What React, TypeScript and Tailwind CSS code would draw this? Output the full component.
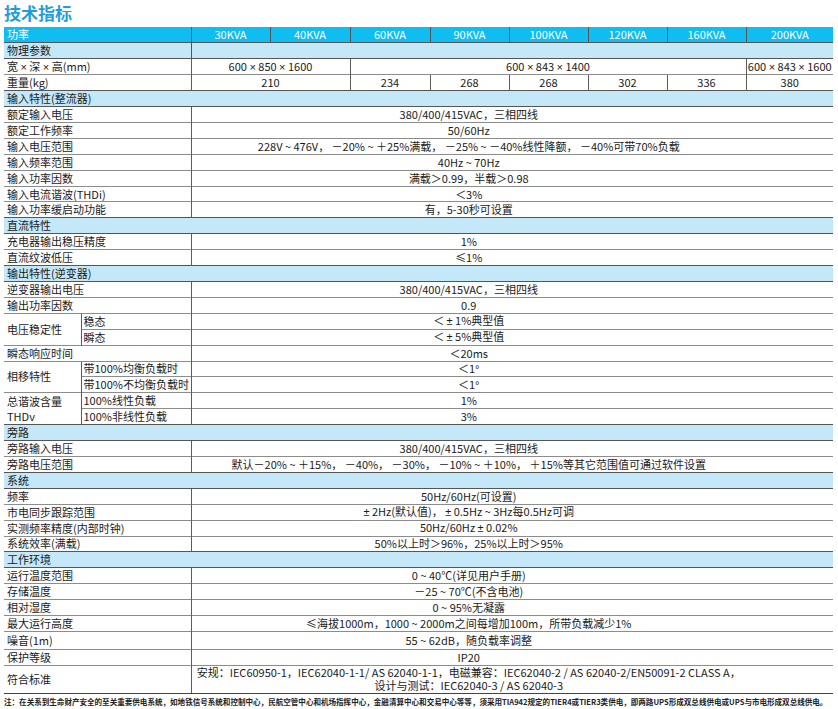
import React from "react"

const LINE = "border-t border-[#8c8c8c]"
const DARK = "border-[#555]"

// narrow symbols: the CJK font draws × ± ° full-width, so use Liberation Sans for them
function fmt(s: string): React.ReactNode {
  return s.split(/([×±°])/).map((part, i) =>
    /^[×±°]$/.test(part) ? (
      <span key={i} className="font-['Liberation_Sans',sans-serif]">{part}</span>
    ) : (
      part
    ),
  )
}

function Section({ label, split }: { label: string; split?: boolean }) {
  if (split) {
    return (
      <tr className="h-[15.92px] bg-[#c5e8f8]">
        <td colSpan={2} className={`border-y ${DARK} pl-[3px]`}>{label}</td>
        <td colSpan={8} className={`border-y border-l ${DARK}`} />
      </tr>
    )
  }
  return (
    <tr className="h-[15.92px] bg-[#c5e8f8]">
      <td colSpan={10} className={`border-y ${DARK} pl-[3px]`}>{label}</td>
    </tr>
  )
}

function Row({ label, value, h = "h-[15.92px]" }: { label: string; value: string; h?: string }) {
  return (
    <tr className={h}>
      <td colSpan={2} className={`${LINE} pl-[3px]`}>{label}</td>
      <td colSpan={8} className={`${LINE} border-l border-l-[#5c5c5c] pr-[87px] text-center`}>{fmt(value)}</td>
    </tr>
  )
}

function SubRows({ label, items }: { label: React.ReactNode; items: [string, string][] }) {
  return (
    <>
      {items.map(([sub, value], i) => (
        <tr key={sub} className="h-[15.92px]">
          {i === 0 && (
            <td rowSpan={items.length} className={`${LINE} pl-[3px]`}>{label}</td>
          )}
          <td className={`${LINE} border-l border-l-[#5c5c5c] pl-[2px]`}>{sub}</td>
          <td colSpan={8} className={`${LINE} border-l border-l-[#5c5c5c] pr-[87px] text-center`}>{fmt(value)}</td>
        </tr>
      ))}
    </>
  )
}

const models = ["30KVA", "40KVA", "60KVA", "90KVA", "100KVA", "120KVA", "160KVA", "200KVA"]
const weights = ["234", "268", "268", "302", "336", "380"]

export default function App() {
  return (
    <div className="w-[838px] h-[709px] overflow-hidden bg-white text-[#1a1a1a] font-['Noto_Sans_CJK_SC','Liberation_Sans',sans-serif]">
      <div className="h-[27px] pl-[4px] text-[17px] font-bold leading-[26px] text-[#1f9edb]">技术指标</div>

      <table className="ml-[4px] w-[829px] table-fixed border-collapse text-[11px] leading-none whitespace-nowrap">
        <colgroup>
          <col className="w-[77px]" />
          <col className="w-[110px]" />
          <col className="w-[79px]" />
          <col className="w-[80px]" />
          <col className="w-[80px]" />
          <col className="w-[79px]" />
          <col className="w-[79px]" />
          <col className="w-[79px]" />
          <col className="w-[79px]" />
          <col className="w-[87px]" />
        </colgroup>
        <tbody>
          <tr className="h-[15.92px] bg-[#10bdf0] text-white">
            <td colSpan={2} className={`border-b ${DARK} pl-[3px]`}>功率</td>
            {models.map((m) => (
              <td key={m} className={`border-b border-l ${DARK} text-center`}>{m}</td>
            ))}
          </tr>

          <Section label="物理参数" split />
          <tr className="h-[15.92px]">
            <td colSpan={2} className={`${LINE} pl-[3px]`}>宽 {fmt("×")} 深 {fmt("×")} 高(mm)</td>
            <td colSpan={2} className={`${LINE} border-l border-l-[#5c5c5c] text-center`}>{fmt("600 × 850 × 1600")}</td>
            <td colSpan={5} className={`${LINE} border-l border-l-[#5c5c5c] text-center`}>{fmt("600 × 843 × 1400")}</td>
            <td className={`${LINE} border-l border-l-[#5c5c5c] text-center`}>{fmt("600 × 843 × 1600")}</td>
          </tr>
          <tr className="h-[15.92px]">
            <td colSpan={2} className={`${LINE} pl-[3px]`}>重量(kg)</td>
            <td colSpan={2} className={`${LINE} border-l border-l-[#5c5c5c] text-center`}>210</td>
            {weights.map((w, i) => (
              <td key={i} className={`${LINE} border-l border-l-[#5c5c5c] text-center`}>{w}</td>
            ))}
          </tr>

          <Section label="输入特性(整流器)" />
          <Row label="额定输入电压" value="380/400/415VAC，三相四线" />
          <Row label="额定工作频率" value="50/60Hz" />
          <Row label="输入电压范围" value="228V ~ 476V， －20% ~ ＋25%满载， －25% ~ －40%线性降额， －40%可带70%负载" />
          <Row label="输入频率范围" value="40Hz ~ 70Hz" />
          <Row label="输入功率因数" value="满载＞0.99，半载＞0.98" />
          <Row label="输入电流谐波(THDi)" value="＜3%" />
          <Row label="输入功率缓启动功能" value="有，5-30秒可设置" />

          <Section label="直流特性" />
          <Row label="充电器输出稳压精度" value="1%" />
          <Row label="直流纹波低压" value="≤1%" />

          <Section label="输出特性(逆变器)" />
          <Row label="逆变器输出电压" value="380/400/415VAC，三相四线" />
          <Row label="输出功率因数" value="0.9" />
          <SubRows label="电压稳定性" items={[["稳态", "＜ ± 1%典型值"], ["瞬态", "＜ ± 5%典型值"]]} />
          <Row label="瞬态响应时间" value="＜20ms" />
          <SubRows label="相移特性" items={[["带100%均衡负载时", "＜1°"], ["带100%不均衡负载时", "＜1°"]]} />
          <SubRows
            label={
              <div className="leading-[15px]">
                总谐波含量
                <br />
                THDv
              </div>
            }
            items={[["100%线性负载", "1%"], ["100%非线性负载", "3%"]]}
          />

          <Section label="旁路" />
          <Row label="旁路输入电压" value="380/400/415VAC，三相四线" />
          <Row label="旁路电压范围" value="默认－20% ~ ＋15%， －40%， －30%， －10% ~ ＋10%， ＋15%等其它范围值可通过软件设置" />

          <Section label="系统" />
          <Row label="频率" value="50Hz/60Hz(可设置)" />
          <Row label="市电同步跟踪范围" value="± 2Hz(默认值)， ± 0.5Hz ~ 3Hz每0.5Hz可调" />
          <Row label="实测频率精度(内部时钟)" value="50Hz/60Hz ± 0.02%" />
          <Row label="系统效率(满载)" value="50%以上时＞96%，25%以上时＞95%" />

          <Section label="工作环境" />
          <Row label="运行温度范围" value="0 ~ 40℃(详见用户手册)" />
          <Row label="存储温度" value="－25 ~ 70℃(不含电池)" />
          <Row label="相对湿度" value="0 ~ 95%无凝露" />
          <Row label="最大运行高度" value="≤海拔1000m，1000 ~ 2000m之间每增加100m，所带负载减少1%" />
          <Row label="噪音(1m)" value="55 ~ 62dB，随负载率调整" h="h-[18px]" />
          <Row label="保护等级" value="IP20" h="h-[16px]" />
          <tr className="h-[28px]">
            <td colSpan={2} className={`${LINE} border-b border-b-[#444] pl-[3px]`}>符合标准</td>
            <td colSpan={8} className={`${LINE} border-b border-b-[#444] border-l border-l-[#5c5c5c] pr-[87px] text-center`}>
              <div className="leading-[13.5px]">安规：IEC60950-1，IEC62040-1-1/ AS 62040-1-1，电磁兼容：IEC62040-2 / AS 62040-2/EN50091-2 CLASS A，</div>
              <div className="leading-[13.5px]">设计与测试：IEC62040-3 / AS 62040-3</div>
            </td>
          </tr>
        </tbody>
      </table>

      <div className="pl-[4px] text-[7.55px] font-bold leading-[15px] whitespace-nowrap text-[#222]">
        注：在关系到生命财产安全的至关重要供电系统，如地铁信号系统和控制中心，民航空管中心和机场指挥中心，金融清算中心和交易中心等等，须采用TIA942规定的TIER4或TIER3类供电，即两路UPS形成双总线供电或UPS与市电形成双总线供电。
      </div>
    </div>
  )
}
